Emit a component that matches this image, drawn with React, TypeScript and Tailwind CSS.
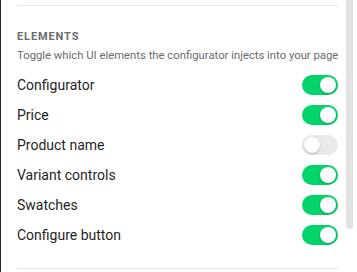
import { useState } from "react";

const ITEMS = [
  { label: "Configurator", on: true },
  { label: "Price", on: true },
  { label: "Product name", on: false },
  { label: "Variant controls", on: true },
  { label: "Swatches", on: true },
  { label: "Configure button", on: true },
];

function Toggle({ on, onClick }: { on: boolean; onClick: () => void }) {
  return (
    <button
      onClick={onClick}
      className={`relative w-[36px] h-[20px] rounded-full transition-colors ${
        on ? "bg-[#00d46a]" : "bg-[#e9e9ec]"
      }`}
    >
      <span
        className={`absolute top-[2px] w-[16px] h-[16px] rounded-full bg-white shadow-[0_1px_2px_rgba(0,0,0,0.25)] ${
          on ? "left-[18px]" : "left-[2px]"
        }`}
      />
    </button>
  );
}

export default function App() {
  const [items, setItems] = useState(ITEMS);

  return (
    <div
      className="relative w-[357px] h-[272px] overflow-hidden bg-white border-l border-[#2a2a2a]"
      style={{ fontFamily: 'Roboto, "Liberation Sans", sans-serif' }}
    >
      <div className="pl-[16px] pr-[19px]">
        <div className="mt-[5px] h-px bg-[#e6e6e6]" />

        <h3 className="mt-[23px] h-[16px] leading-[16px] text-[11px] font-bold tracking-[0.08em] uppercase text-[#6b6b6b]">
          Elements
        </h3>
        <p className="mt-[2px] h-[18px] leading-[18px] text-[11.3px] text-[#6b6b6b] whitespace-nowrap">
          Toggle which UI elements the configurator injects into your page
        </p>

        <div className="mt-[5px]">
          {items.map((item, i) => (
            <div key={item.label} className="h-[30px] flex items-center justify-between">
              <span className="text-[14px] text-[#1f1f1f]">{item.label}</span>
              <Toggle
                on={item.on}
                onClick={() =>
                  setItems(items.map((x, j) => (j === i ? { ...x, on: !x.on } : x)))
                }
              />
            </div>
          ))}
        </div>

        <div className="mt-[18px] h-px bg-[#e6e6e6]" />
      </div>

      {/* scrollbar */}
      <div className="absolute right-[4px] top-0 w-[7px] h-[229px] rounded-b-full bg-[#e2e2e2]" />
    </div>
  );
}
